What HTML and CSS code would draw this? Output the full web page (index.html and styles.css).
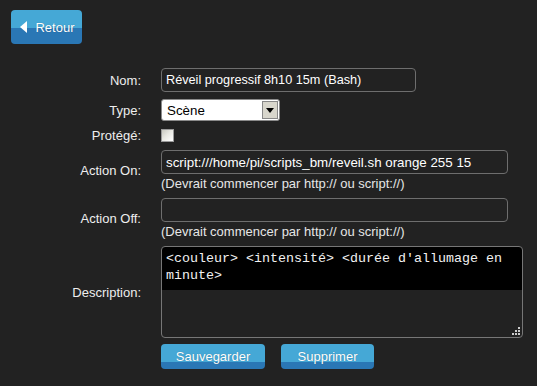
FILE: index.html
```html
<!DOCTYPE html>
<html lang="fr">
<head>
    <meta charset="UTF-8">
    <meta name="viewport" content="width=device-width, initial-scale=1.0">
    <title>Modifier la scène</title>
    <link rel="stylesheet" href="styles.css">
</head>
<body>
    <div class="toolbar">
        <a href="#" class="btn btn-back"><span class="arrow"></span>Retour</a>
    </div>

    <form class="edit-form">
        <label class="label" for="nom">Nom:</label>
        <div class="field">
            <input type="text" id="nom" class="text-input short" value="Réveil progressif 8h10 15m (Bash)">
        </div>

        <label class="label" for="type">Type:</label>
        <div class="field">
            <span class="select-wrap">
                <select id="type" class="select">
                    <option>Scène</option>
                    <option>Interrupteur</option>
                </select>
                <span class="select-arrow"></span>
            </span>
        </div>

        <label class="label" for="protege">Protégé:</label>
        <div class="field">
            <input type="checkbox" id="protege" class="check">
        </div>

        <label class="label" for="action-on">Action On:</label>
        <div class="field">
            <input type="text" id="action-on" class="text-input" value="script:///home/pi/scripts_bm/reveil.sh orange 255 15">
            <div class="hint">(Devrait commencer par http:// ou script://)</div>
        </div>

        <label class="label" for="action-off">Action Off:</label>
        <div class="field">
            <input type="text" id="action-off" class="text-input" value="">
            <div class="hint">(Devrait commencer par http:// ou script://)</div>
        </div>

        <label class="label" for="description">Description:</label>
        <div class="field">
            <span class="area-wrap">
                <textarea id="description" class="area">&lt;couleur&gt; &lt;intensité&gt; &lt;durée d'allumage en minute&gt;</textarea>
                <svg class="grip" width="8" height="8" viewBox="0 0 8 8">
                    <rect x="6" y="0" width="2" height="2" fill="#ccc"/>
                    <rect x="3" y="3" width="2" height="2" fill="#ccc"/>
                    <rect x="6" y="3" width="2" height="2" fill="#ccc"/>
                    <rect x="0" y="6" width="2" height="2" fill="#ccc"/>
                    <rect x="3" y="6" width="2" height="2" fill="#ccc"/>
                    <rect x="6" y="6" width="2" height="2" fill="#ccc"/>
                </svg>
            </span>
        </div>

        <div class="label"></div>
        <div class="field actions">
            <button type="button" class="btn btn-save">Sauvegarder</button>
            <button type="button" class="btn btn-delete">Supprimer</button>
        </div>
    </form>
</body>
</html>
```

FILE: styles.css
```css
body {
    margin: 0;
    padding: 0;
    background: #222222;
    color: #eeeeee;
    font-family: "Liberation Sans", Arial, sans-serif;
    font-size: 13px;
}
.toolbar {
    padding: 10px 0 0 11px;
    height: 34px;
}
.btn {
    display: inline-flex;
    align-items: center;
    justify-content: center;
    box-sizing: border-box;
    border: none;
    border-radius: 4px;
    background: linear-gradient(#45a8d6 0, #45a8d6 18px, #2a77b5 18px, #2a77b5 100%);
    color: #fff;
    font-family: "Liberation Sans", Arial, sans-serif;
    font-size: 13px;
    text-decoration: none;
    text-shadow: 0 0 1px rgba(0, 0, 0, 0.3);
    cursor: pointer;
    padding: 0;
}
.btn-back {
    width: 71px;
    height: 34px;
    padding-left: 2px;
}
.btn-back .arrow {
    width: 0;
    height: 0;
    border-top: 6px solid transparent;
    border-bottom: 6px solid transparent;
    border-right: 7px solid #fff;
    margin-right: 8px;
}
.edit-form {
    display: grid;
    grid-template-columns: 141px 1fr;
    column-gap: 20px;
    row-gap: 7px;
    align-items: center;
    margin-top: 24px;
}
.label {
    text-align: right;
    white-space: nowrap;
}
.field {
    display: flex;
    flex-direction: column;
    align-items: flex-start;
}
.text-input {
    box-sizing: border-box;
    width: 347px;
    height: 24px;
    padding: 0 4px;
    border: 1px solid #6e6e6e;
    border-radius: 4px;
    background: #222222;
    color: #fff;
    font-family: "Liberation Sans", Arial, sans-serif;
    font-size: 13.33px;
    outline: none;
}
.text-input.short {
    width: 255px;
    font-size: 12.7px;
}
.hint {
    line-height: 15px;
    margin-top: 2px;
    color: #e6e6e6;
}
.select-wrap {
    position: relative;
    display: inline-block;
}
.select {
    appearance: none;
    -webkit-appearance: none;
    box-sizing: border-box;
    width: 119px;
    height: 22px;
    padding: 0 5px;
    border: 1px solid #8a8a8a;
    border-radius: 3px;
    background: #fff;
    color: #000;
    font-family: "Liberation Sans", Arial, sans-serif;
    font-size: 13.33px;
    outline: none;
}
.select-arrow {
    position: absolute;
    top: 2px;
    right: 2px;
    width: 16px;
    height: 18px;
    box-sizing: border-box;
    border: 1px solid #888;
    background: #d8d6cc;
    pointer-events: none;
}
.select-arrow::after {
    content: '';
    position: absolute;
    left: 3px;
    top: 6px;
    border-left: 4px solid transparent;
    border-right: 4px solid transparent;
    border-top: 5px solid #000;
}
.check {
    appearance: none;
    -webkit-appearance: none;
    width: 13px;
    height: 13px;
    margin: 0;
    border: 1px solid #9a9a9a;
    background: linear-gradient(135deg, #c8c8c0 0, #e8e8e2 45%, #ffffff 100%);
}
.area-wrap {
    position: relative;
    display: inline-block;
    line-height: 0;
}
.area {
    box-sizing: border-box;
    width: 362px;
    height: 92px;
    padding: 3px 4px;
    border: 1px solid #777;
    border-radius: 4px;
    background: linear-gradient(#000 0, #000 43px, #222222 43px, #222222 100%);
    color: #f2f2f2;
    font-family: "Liberation Mono", "Courier New", monospace;
    font-size: 13.33px;
    line-height: 17px;
    resize: none;
    outline: none;
}
.grip {
    position: absolute;
    right: 3px;
    bottom: 3px;
}
.actions {
    flex-direction: row;
    gap: 16px;
    height: 25px;
    margin-top: -1px;
}
.btn-save {
    width: 104px;
    height: 25px;
}
.btn-delete {
    width: 93px;
    height: 25px;
}
```
